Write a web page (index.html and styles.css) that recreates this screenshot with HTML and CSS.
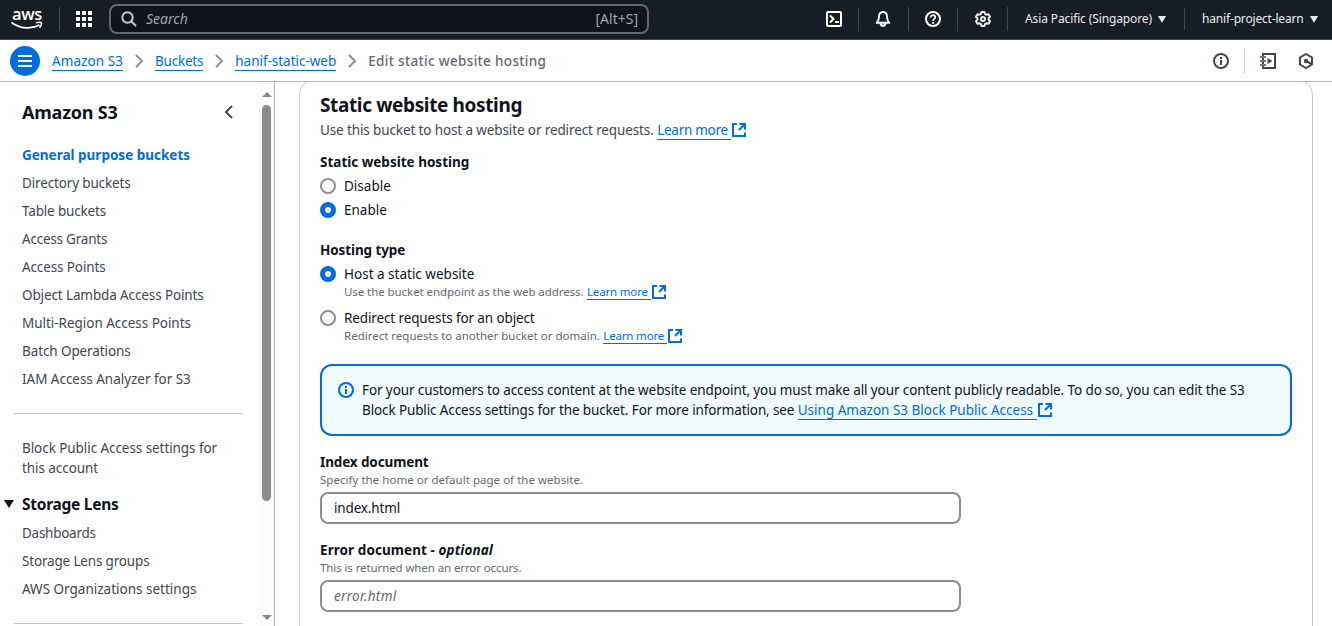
FILE: index.html
```
<!DOCTYPE html>
<html lang="en">
<head>
<meta charset="utf-8">
<title>Edit static website hosting</title>
<link rel="stylesheet" href="styles.css">
</head>
<body>
<svg class="defs" width="0" height="0">
  <symbol id="ext" viewBox="0 0 16 16"><path d="M6 2H2v12h12v-3.500" fill="none" stroke="currentColor" stroke-width="2"/><path d="M8.500 2H14v5.500M14 2 8 8" fill="none" stroke="currentColor" stroke-width="2"/></symbol>
  <symbol id="info" viewBox="0 0 16 16"><circle cx="8" cy="8" r="7" fill="none" stroke="currentColor" stroke-width="2"/><path d="M8 7v5M8 4v2" stroke="currentColor" stroke-width="2"/></symbol>
  <symbol id="chev" viewBox="0 0 16 16"><path d="m5 2 6 6-6 6" fill="none" stroke="currentColor" stroke-width="2"/></symbol>
</svg>
<header class="top">
  <div class="logo"><span>aws</span><svg width="32" height="10" viewBox="0 0 32 10"><path d="M.5 1.500C9 8 20 8.500 28.500 4" fill="none" stroke="#fff" stroke-width="1.800"/><path d="M25 1.800c2-.8 4.800-.8 5.300 0 .4.900-.5 3.500-1.800 5" fill="none" stroke="#fff" stroke-width="1.500"/></svg></div>
  <i class="sep sep-logo"></i>
  <svg class="grid" width="16" height="16" viewBox="0 0 16 16" fill="#fff"><path d="M0 0h4v4H0zM6 0h4v4H6zM12 0h4v4h-4zM0 6h4v4H0zM6 6h4v4H6zM12 6h4v4h-4zM0 12h4v4H0zM6 12h4v4H6zM12 12h4v4h-4z"/></svg>
  <div class="search"><svg width="16" height="16" viewBox="0 0 16 16" fill="none" stroke="#c6c6cd" stroke-width="2"><circle cx="6.500" cy="6.500" r="5.200"/><path d="m10.200 10.200 4.800 4.800"/></svg><em>Search</em><span>[Alt+S]</span></div>
  <div class="tools">
    <div class="tool"><svg width="16" height="16" viewBox="0 0 16 16" fill="none" stroke="#fff" stroke-width="2"><rect x="1" y="1" width="14" height="14" rx="1"/><path d="m4 4.500 3.500 3.500L4 11.500M9 11h4"/></svg></div>
    <div class="tool"><svg width="16" height="16" viewBox="0 0 16 16" fill="none" stroke="#fff" stroke-width="1.900"><path d="M8 1C5 1 4 3.200 4 5.500c0 3-.8 4.800-2.300 6.300h12.600C12.800 10.300 12 8.500 12 5.500 12 3.200 11 1 8 1z" stroke-linejoin="round"/><path d="M5.500 12.500c.4 3 4.600 3 5 0"/></svg></div>
    <div class="tool help"><svg width="16" height="16" viewBox="0 0 16 16" fill="none" stroke="#fff" stroke-width="2"><circle cx="8" cy="8" r="7"/><path d="M5.700 6.500C5.700 3.500 10.300 3.500 10.300 6.300 10.300 8 8 7.900 8 10M8 11v2" stroke-width="1.700"/></svg></div>
    <div class="tool gear"><svg width="16" height="16" viewBox="0 0 16 16" fill="none" stroke="#ebebf0" stroke-width="2" stroke-linejoin="round"><path d="M6.500 1h3l.6 2 1.400.7 2-.5L15 5.800l-1.400 1.500v1.400l1.400 1.500-1.500 2.600-2-.5-1.400.7-.6 2h-3l-.6-2-1.400-.7-2 .5L1 10.200l1.400-1.500V7.300L1 5.800l1.500-2.600 2 .5L5.900 3z"/><circle cx="8" cy="8" r="2"/></svg></div>
  </div>
  <div class="menu region"><span class="n12">Asia Pacific (Singapore)</span><i class="caret"></i></div>
  <div class="menu account"><span class="n17">hanif-project-learn</span><i class="caret"></i></div>
</header>
<nav class="crumbs">
  <div class="burger"><svg width="14" height="12" viewBox="0 0 14 12"><path d="M0 1h14M0 6h14M0 11h14" stroke="#fff" stroke-width="2"/></svg></div>
  <a class="p8">Amazon S3</a><svg class="chev"><use href="#chev"/></svg>
  <a class="n20">Buckets</a><svg class="chev"><use href="#chev"/></svg>
  <a class="n3">hanif-static-web</a><svg class="chev"><use href="#chev"/></svg>
  <span class="here">Edit static website hosting</span>
  <div class="panel-icons">
    <svg class="ic"><use href="#info"/></svg><i></i>
    <svg class="ic book" viewBox="0 0 16 16" fill="none" stroke="currentColor" stroke-width="2"><path d="M3 3V1h12v14H3v-2M3 5v2M3 9v2"/><path d="M0 4h6M0 8h6M0 12h6" stroke-width="1.600"/><path d="M7.500 5v6l5-3z" fill="currentColor" stroke="none"/></svg>
    <svg class="ic" viewBox="0 0 16 16" fill="none" stroke="currentColor" stroke-width="2"><path d="m8 1 6 3.500v7L8 15l-6-3.500v-7z"/><circle cx="8" cy="8" r="2.200" fill="currentColor" stroke="none"/><path d="m8 8 5.500 3"/></svg>
  </div>
</nav>
<div class="body">
  <aside class="side">
    <div class="side-main">
      <div class="side-head"><h2 class="n20">Amazon S3</h2><svg width="16" height="16" viewBox="0 0 16 16"><path d="M11 2 5 8l6 6" fill="none" stroke="#424650" stroke-width="2"/></svg></div>
      <ul class="links">
        <li class="on">General purpose buckets</li>
        <li class="n15">Directory buckets</li>
        <li class="n17">Table buckets</li>
        <li class="n20">Access Grants</li>
        <li class="n12">Access Points</li>
        <li class="n12">Object Lambda Access Points</li>
        <li class="n3">Multi-Region Access Points</li>
        <li class="n10">Batch Operations</li>
        <li class="n3">IAM Access Analyzer for S3</li>
      </ul>
      <hr>
      <p class="block n7">Block Public Access settings for<br>this account</p>
      <h3 class="n27"><i></i>Storage Lens</h3>
      <ul class="links">
        <li class="n27">Dashboards</li>
        <li class="n17">Storage Lens groups</li>
        <li>AWS Organizations settings</li>
      </ul>
      <hr class="last">
    </div>
    <div class="scroll"><i class="up"></i><i class="thumb"></i><i class="down"></i></div>
  </aside>
  <main>
    <section class="card">
      <h1>Static website hosting</h1>
      <p class="desc"><span class="n12">Use this bucket to host a website or redirect requests.</span><a class="n27">Learn more&nbsp;</a><svg class="ext"><use href="#ext"/></svg></p>
      <h4 class="first">Static website hosting</h4>
      <div class="radio"><i></i>Disable</div>
      <div class="radio"><i class="sel"></i>Enable</div>
      <h4 class="type n10">Hosting type</h4>
      <div class="radio"><i class="sel"></i>Host a static website</div>
      <p class="hint in"><span class="n7">Use the bucket endpoint as the web address.</span><a class="n17">Learn more&nbsp;</a><svg class="ext"><use href="#ext"/></svg></p>
      <div class="radio n12"><i></i>Redirect requests for an object</div>
      <p class="hint in"><span>Redirect requests to another bucket or domain.</span><a class="n17">Learn more&nbsp;</a><svg class="ext"><use href="#ext"/></svg></p>
      <div class="alert"><svg class="ic"><use href="#info"/></svg><p class="n10">For your customers to access content at the website endpoint, you must make all your content publicly readable. To do so, you can edit the S3<br><span class="n12">Block Public Access settings for the bucket. For more information, see </span><a>Using Amazon S3 Block Public Access&nbsp;</a><svg class="ext"><use href="#ext"/></svg></p></div>
      <h4 class="n12">Index document</h4>
      <p class="hint p3">Specify the home or default page of the website.</p>
      <div class="input n15">index.html</div>
      <h4 class="err p8">Error document - <em>optional</em></h4>
      <p class="hint n10">This is returned when an error occurs.</p>
      <div class="input ph">error.html</div>
    </section>
  </main>
</div>
</body>
</html>
```
FILE: styles.css
```
* { box-sizing: border-box; }
body { margin: 0; width: 1332px; height: 626px; overflow: hidden; display: flex; flex-direction: column; background: #fff; color: #0f141a; font: 13.5px/20px "Noto Sans", "Open Sans", sans-serif; }
h1, h2, h3, h4, p, ul { margin: 0; padding: 0; list-style: none; white-space: nowrap; }
.defs { position: absolute; }
svg { flex: none; display: block; }

/* tracking steps, in hundredths of a pixel */
.p8 { letter-spacing: .08px; }
.p3 { letter-spacing: .03px; }
.n3 { letter-spacing: -.03px; }
.n7 { letter-spacing: -.07px; }
.n10 { letter-spacing: -.1px; }
.n12 { letter-spacing: -.12px; }
.n15 { letter-spacing: -.15px; }
.n17 { letter-spacing: -.17px; }
.n20 { letter-spacing: -.22px; }
.n27 { letter-spacing: -.27px; }

.top { display: flex; align-items: center; height: 40px; flex: none; padding-bottom: 1px; background: #161d26; border-bottom: 1px solid #424650; color: #ebebf0; font-size: 12px; }
.logo { width: 32px; height: 24px; margin-left: 11px; padding-top: 1px; display: flex; flex-direction: column; color: #fff; }
.logo span { height: 13px; font: 600 16.5px/12px "Open Sans", sans-serif; padding-left: 1px; letter-spacing: -.4px; }
.sep { width: 1px; height: 24px; background: #424650; }
.sep-logo { margin-left: 16px; }
.grid { margin-left: 16px; }
.search { display: flex; align-items: center; width: 540px; height: 30px; margin-left: 17px; padding: 0 9px 0 10px; border: 2px solid #656871; border-radius: 8px; background: #0f141a; color: #a4a4ad; font-size: 14px; }
.search em { margin-left: 9px; }
.search span { margin-left: auto; }
.tools { display: flex; margin-left: 160px; }
.tool { display: flex; align-items: center; justify-content: center; width: 50px; height: 24px; border-right: 1px solid #424650; }
.tool + .tool svg { margin-right: 1px; }
.tool.gear svg { margin: 0 0 0 1px; }
.help { width: 49px; }
.menu { display: flex; align-items: center; justify-content: space-between; height: 22px; }
.region { width: 177px; padding: 0 18px 0 17px; border-right: 1px solid #424650; }
.account { flex: 1; padding: 0 14px 0 17px; }
.caret { border: 4px solid transparent; border-top: 7px solid #ebebf0; border-bottom: 0; }

.crumbs { display: flex; align-items: center; height: 42px; flex: none; padding: 0 18px 0 10px; border-bottom: 1px solid #b4b4bb; }
.burger { display: grid; place-items: center; width: 30px; height: 30px; margin-right: 12px; border-radius: 50%; background: #006ce0; }
a { color: #006ce0; border-bottom: 1px solid #006ce0; }
.crumbs a { height: 20px; line-height: 21px; }
.chev { width: 16px; height: 16px; margin: 0 8px; color: #8c8c94; }
.here { color: #656871; font-weight: 500; letter-spacing: .33px; }
.panel-icons { display: flex; align-items: center; margin-left: auto; color: #424650; }
.panel-icons i { width: 1px; height: 25px; margin: 0 15px; background: #c6c6cd; }
.ic { width: 16px; height: 16px; }
.book { margin-right: 22px; }

.body { display: flex; flex: 1; min-height: 0; }
.side { display: flex; width: 275px; border-right: 1px solid #b4b4bb; color: #424650; overflow: hidden; }
.side-main { width: 259px; }
.side-head { display: flex; align-items: center; justify-content: space-between; height: 22px; margin: 19px 22px 20px; }
h2 { font-size: 18px; color: #0f141a; }
.links li { height: 28px; padding: 4px 0 4px 22px; }
.side-head + .links { margin-top: -2px; }
.on { color: #006ce0; font-weight: 700; }
hr { height: 1px; margin: 20px 16px 0 14px; border: 0; background: #c6c6cd; }
.block { margin: 24px 0 0 22px; }
h3 { display: flex; align-items: center; height: 20px; margin: 16px 0 5px 4px; font-size: 15.5px; color: #0f141a; }
h3 i { margin-right: 8px; border: 5px solid transparent; border-top: 8px solid #0f141a; border-bottom: 0; }
.scroll { display: flex; flex-direction: column; align-items: center; width: 15px; padding: 10px 0 6px; background: #fcfcfc; }
.up { border: 5px solid transparent; border-bottom: 5px solid #8b8b8b; border-top: 0; }
.thumb { width: 9px; height: 396px; margin-top: 8px; border-radius: 5px; background: #8b8b8b; }
.down { margin-top: auto; border: 5px solid transparent; border-top: 5px solid #8b8b8b; border-bottom: 0; }

main { flex: 1; padding: 0 19px 0 24px; overflow: hidden; }
.card { height: 580px; margin-top: -3px; padding: 13px 20px; border: 1px solid #c6c6cd; border-radius: 16px; }
h1 { font-size: 19px; line-height: 24px; letter-spacing: -.37px; }
h4 { font-size: 13.5px; line-height: 20px; }
.desc { display: flex; color: #424650; margin-top: 3px; }
.desc a { height: 20px; margin-left: 3.5px; line-height: 20px; }
.hint a { margin-left: 3.5px; line-height: 15px; }
.ext { width: 16px; height: 16px; color: #006ce0; }
.desc .ext { margin-top: 2px; }
.first { margin-top: 12px; }
.radio { display: flex; align-items: center; height: 20px; margin-top: 4px; }
.radio i { width: 16px; height: 16px; margin-right: 8px; border: 2px solid #8c8c94; border-radius: 50%; }
.radio .sel { border: 5px solid #006ce0; }
.type { margin-top: 20px; }
.hint { display: flex; color: #656871; font-size: 11.5px; line-height: 16px; }
.in { margin: 0 0 8px 24px; }
.alert { display: flex; height: 72px; margin: 20px 0 16px; padding: 14px 16px; border: 2px solid #006ce0; border-radius: 12px; background: #f0fbff; }
.alert .ic { margin: 2px 8px 0 0; color: #006ce0; }
.alert a { letter-spacing: 0; }
.alert .ext { display: inline-block; vertical-align: -3px; }
.input { display: flex; align-items: center; width: 641px; height: 32px; margin-top: 4px; padding: 0 12px; border: 2px solid #8c8c94; border-radius: 8px; }
.err { margin-top: 16px; }
.ph { color: #656871; font-style: italic; letter-spacing: .29px; }
```
